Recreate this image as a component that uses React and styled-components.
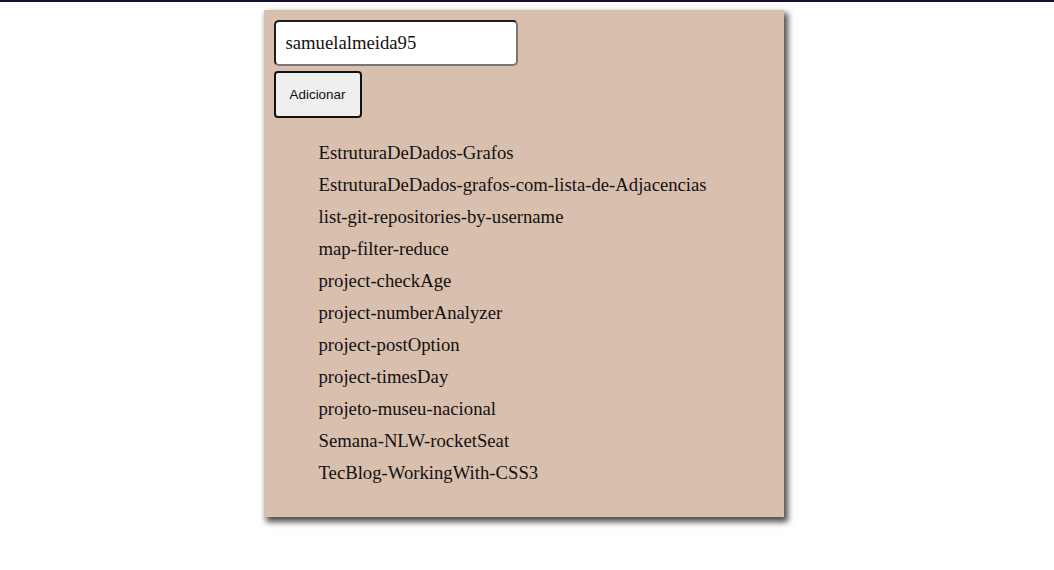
import React, { useState } from "react";
import styled, { createGlobalStyle } from "styled-components";

const Global = createGlobalStyle`
  html, body { margin: 0; padding: 0; background: #ffffff; }
  body { font-family: "Liberation Serif", "Times New Roman", serif; }
`;

const TopBar = styled.div`
  height: 2px;
  background: #150d33;
`;

const Page = styled.main`
  display: flex;
  justify-content: center;
  padding: 8px 7px 20px 0;
`;

const Card = styled.section`
  width: 520px;
  box-sizing: border-box;
  padding: 10px 10px 28px;
  background: #d9bfad;
  box-shadow: 3px 4px 6px 1px rgba(0, 0, 0, 0.7);
  display: flex;
  flex-direction: column;
  align-items: flex-start;
`;

const Input = styled.input`
  width: 244px;
  height: 46px;
  box-sizing: border-box;
  padding: 0 10px;
  border: 2px solid;
  border-color: #1e1e1e #777777 #777777 #1e1e1e;
  border-radius: 5px;
  background: #ffffff;
  font-family: "Liberation Serif", "Times New Roman", serif;
  font-size: 18.7px;
  color: #111;
  outline: none;
`;

const Button = styled.button`
  margin-top: 5px;
  width: 88px;
  height: 47px;
  box-sizing: border-box;
  border: 2px solid #111;
  border-radius: 4px;
  background: #efefef;
  font-family: "Liberation Sans", Arial, sans-serif;
  font-size: 13.4px;
  color: #111;
  padding: 0;
`;

const List = styled.ul`
  list-style: none;
  margin: 19px 0 0;
  padding: 0 0 0 45px;
`;

const Item = styled.li`
  font-size: 18.7px;
  line-height: 32px;
  color: #111;
`;

const repos = [
  "EstruturaDeDados-Grafos",
  "EstruturaDeDados-grafos-com-lista-de-Adjacencias",
  "list-git-repositories-by-username",
  "map-filter-reduce",
  "project-checkAge",
  "project-numberAnalyzer",
  "project-postOption",
  "project-timesDay",
  "projeto-museu-nacional",
  "Semana-NLW-rocketSeat",
  "TecBlog-WorkingWith-CSS3",
];

export default function App() {
  const [user, setUser] = useState("samuelalmeida95");
  return (
    <>
      <Global />
      <TopBar />
      <Page>
        <Card>
          <Input value={user} onChange={(e) => setUser(e.target.value)} />
          <Button>Adicionar</Button>
          <List>
            {repos.map((r) => (
              <Item key={r}>{r}</Item>
            ))}
          </List>
        </Card>
      </Page>
    </>
  );
}
